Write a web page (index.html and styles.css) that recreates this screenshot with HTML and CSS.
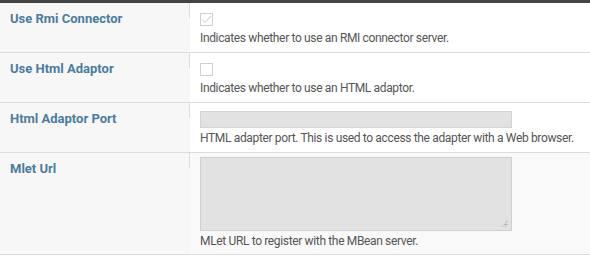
FILE: index.html
```html
<!DOCTYPE html>
<html lang="en">
<head>
  <meta charset="UTF-8">
  <title>Agent Settings</title>
  <link rel="stylesheet" href="styles.css">
</head>
<body>
  <table class="props">
    <tr>
      <th>Use Rmi Connector</th>
      <td>
        <span class="check"><svg width="11" height="9" viewBox="0 0 11 9"><path d="M1 4.5 L4 7.5 L10 1" fill="none" stroke="#c8c8c8" stroke-width="1"/></svg></span>
        <p class="desc">Indicates whether to use an RMI connector server.</p>
      </td>
    </tr>
    <tr>
      <th>Use Html Adaptor</th>
      <td>
        <span class="check"></span>
        <p class="desc">Indicates whether to use an HTML adaptor.</p>
      </td>
    </tr>
    <tr>
      <th>Html Adaptor Port</th>
      <td class="tight">
        <div class="field"></div>
        <p class="desc">HTML adapter port. This is used to access the adapter with a Web browser.</p>
      </td>
    </tr>
    <tr class="hover">
      <th>Mlet Url</th>
      <td class="tight">
        <div class="area"><span class="grip"></span></div>
        <p class="desc">MLet URL to register with the MBean server.</p>
      </td>
    </tr>
  </table>
</body>
</html>
```

FILE: styles.css
```css
body { margin: 0; background: #fff; font-family: Roboto, "Noto Sans", sans-serif; font-size: 12px; }
.props { width: 100%; border-collapse: separate; border-spacing: 0; border-top: 3px solid #444; }
.props th, .props td { box-sizing: content-box; border-bottom: 1px solid #dcdcdc; vertical-align: top; }
.props th { position: relative; width: 180px; height: 42px; padding: 7px 0 0 10px; text-align: left; background: #f7f7f7; color: #4b7c9f; font-size: 13px; font-weight: bold; line-height: 18px; }
.props th::after { content: ""; position: absolute; right: 0; top: 0; width: 1px; height: 15px; background: #dcdcdc; }
.props td { height: 39px; padding: 10px 10px 0; }
.props td.tight { height: 41px; padding-top: 8px; }
.props tr.hover th { height: 94px; }
.props tr.hover td { height: 97px; padding-top: 4px; background: #f9f9f9; }
.check { display: block; width: 11px; height: 11px; border: 1px solid #d0d0d0; background: #fff; }
.check svg { display: block; margin-top: 1px; }
.desc { margin: 4px 0 0; color: #555; line-height: 16px; letter-spacing: -0.35px; white-space: nowrap; }
.tight .desc { margin-top: 2px; }
.field { width: 310px; height: 15px; background: #e2e2e2; border: 1px solid #d4d4d4; }
.area { position: relative; width: 310px; height: 72px; background: #e2e2e2; border: 1px solid #cfcfcf; }
.grip { position: absolute; right: 3px; bottom: 3px; width: 7px; height: 7px; background: radial-gradient(circle, #bbb 1px, transparent 1.2px) 0 0 / 3px 3px; clip-path: polygon(100% 0, 100% 100%, 0 100%); }
```
